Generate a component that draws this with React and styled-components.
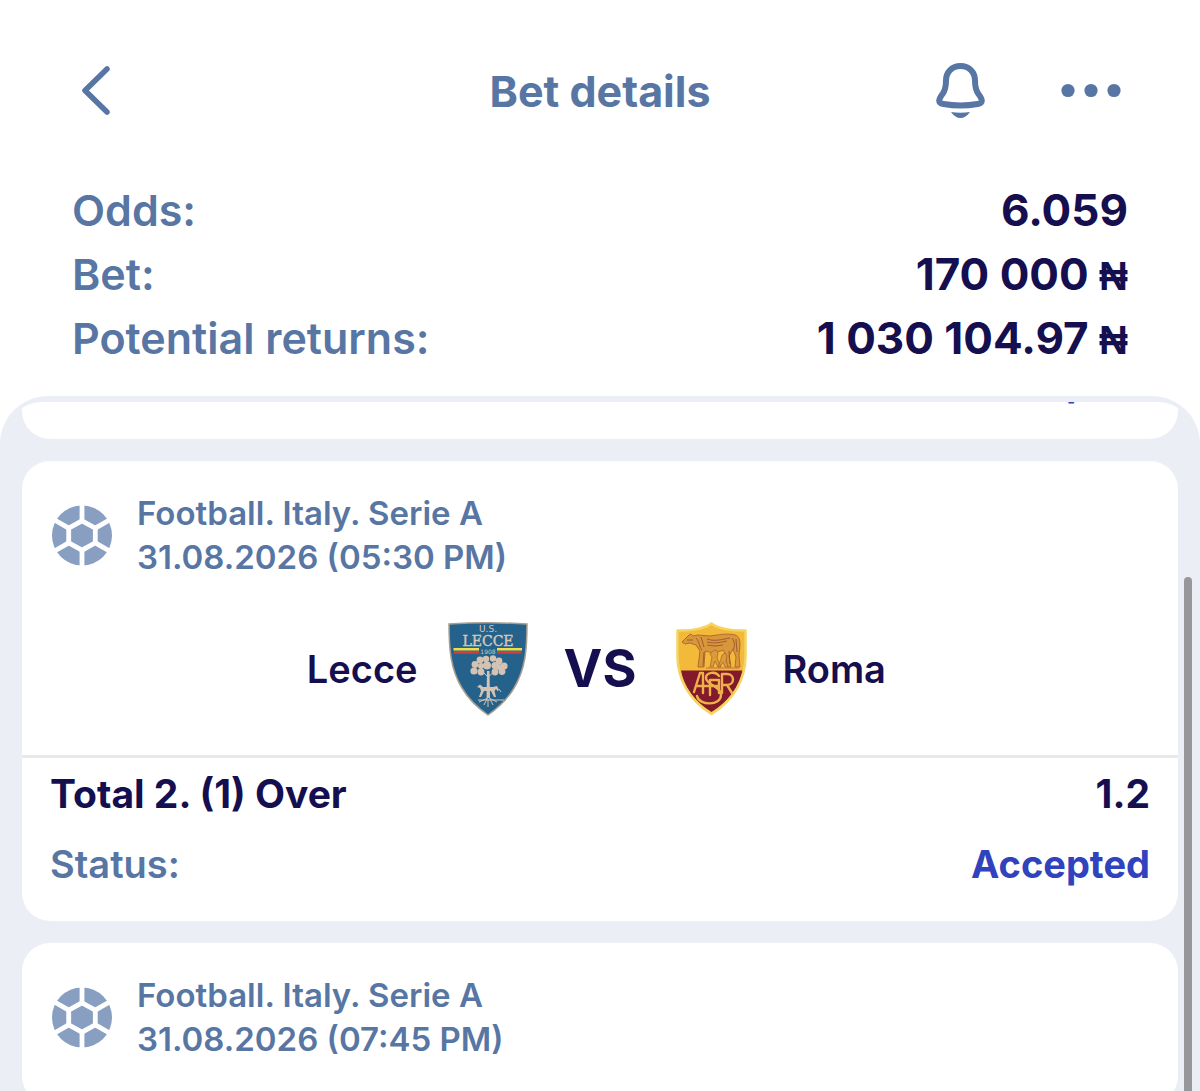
import React from "react";
import styled, { createGlobalStyle } from "styled-components";

const slate = "#5876a3";
const navy = "#150f50";
const haze = "#ebeef4";

const GlobalStyle = createGlobalStyle`
  *, *::before, *::after { box-sizing: border-box; }
  body {
    margin: 0;
    background: #fff;
    color: ${navy};
    font-family: Inter, "Liberation Sans", sans-serif;
  }
  h1, h2, p, dl, dt, dd { margin: 0; font: inherit; }
`;

const Screen = styled.div`
  display: flex;
  flex-direction: column;
  height: 100vh;
  overflow: hidden;
`;

const TopBar = styled.header`
  display: grid;
  grid-template-columns: 1fr auto 1fr;
  align-items: center;
  padding: 60px 78px 56px;
  color: ${slate};
`;

const Title = styled.h1`
  && { font-size: 43px; line-height: 62px; font-weight: 700; }
`;

const Actions = styled.div`
  display: flex;
  justify-content: flex-end;
  gap: 74px;
`;

const IconButton = styled.button`
  display: flex;
  align-items: center;
  justify-self: start;
  padding: 0;
  border: 0;
  background: none;
  color: inherit;
  cursor: pointer;
`;

const Summary = styled.dl`
  padding: 0 72px 26px;
`;

const SummaryRow = styled.div`
  display: flex;
  justify-content: space-between;
  font-size: 43px;
  line-height: 64px;
`;

const SummaryLabel = styled.dt`
  && { font-weight: 600; }
  color: ${slate};
`;

const SummaryValue = styled.dd`
  && { font-size: 44px; font-weight: 700; }
`;

const Currency = styled.span`
  font-family: "Liberation Sans", sans-serif;
  font-size: 40px;
  line-height: 1;
`;

const Sheet = styled.main`
  position: relative;
  flex: 1;
  min-height: 0;
  padding-top: 6px;
  border-radius: 48px 48px 0 0;
  background: ${haze};
`;

const BetList = styled.div`
  display: flex;
  flex-direction: column;
  gap: 22px;
  height: 100%;
  margin: 0 6px;
  padding: 0 16px;
  overflow: hidden;
  border-radius: 36px 36px 0 0;
`;

const ScrolledCard = styled.div`
  display: flex;
  flex-direction: column;
  flex: none;
  justify-content: flex-end;
  height: 37px;
  overflow: hidden;
  border-radius: 0 0 28px 28px;
  background: #fff;
`;

const Card = styled.article`
  flex: none;
  border-radius: 28px;
  background: #fff;
`;

const EventInfo = styled.header`
  display: flex;
  align-items: center;
  gap: 24px;
  padding: 30px 28px 43px 30px;
  color: ${slate};
  font-size: 33px;
  line-height: 44px;
  font-weight: 600;
`;

const Teams = styled.div`
  display: grid;
  grid-template-columns: 1fr auto 1fr;
  align-items: center;
  column-gap: 36px;
  padding-bottom: 39px;
  border-bottom: 3px solid #e6e9ee;
`;

const Team = styled.div`
  display: flex;
  align-items: center;
  justify-content: ${(p) => (p.$home ? "flex-end" : "flex-start")};
  gap: 30px;
  font-size: 38px;
  line-height: 48px;
  font-weight: 600;
`;

const Versus = styled.span`
  font-size: 52px;
  line-height: 64px;
  font-weight: 700;
`;

const Market = styled.div`
  padding: 1px 28px 22px;
`;

const MarketRow = styled.div`
  display: flex;
  justify-content: ${(p) => (p.$end ? "flex-end" : "space-between")};
  font-size: 39px;
  line-height: 70px;
  font-weight: 700;
`;

const StatusLabel = styled.span`
  color: ${slate};
  font-size: 38px;
  font-weight: 600;
`;

const StatusValue = styled.span`
  color: #3042bd;
  font-size: 38px;
`;

const ScrollThumb = styled.div`
  position: absolute;
  top: 181px;
  right: 8px;
  bottom: -8px;
  width: 8px;
  border-radius: 4px;
  background: #96969b;
`;

function BackIcon() {
  return (
    <svg width="40" height="56" viewBox="0 0 40 56" fill="none" stroke="currentColor" strokeWidth="5.5" strokeLinecap="round" strokeLinejoin="round" aria-hidden="true">
      <path d="M29 6 7 27.500 29 49" />
    </svg>
  );
}

function BellIcon() {
  return (
    <svg width="50" height="58" viewBox="0 0 50 58" aria-hidden="true">
      <path d="M24.500 4C16 4 10 10.300 10 18.500c0 6-.6 9.500-3.300 13.200C4.500 34.700 3.200 36.600 3.200 38.700c0 2.300 1.600 2.800 4.300 3.300 11 1.900 23 1.900 34 0 2.700-.5 4.300-1 4.300-3.300 0-2.100-1.300-4-3.500-7-2.700-3.700-3.300-7.200-3.300-13.200C39 10.300 33 4 24.500 4Z" fill="none" stroke="currentColor" strokeWidth="6" strokeLinejoin="round" />
      <path d="M15 50c6 1 13 1 19 0-3 4-6 6-9.500 6s-6.500-2-9.500-6Z" fill="currentColor" />
    </svg>
  );
}

function DotsIcon() {
  return (
    <svg width="62" height="58" viewBox="0 0 62 58" fill="currentColor" aria-hidden="true">
      <circle cx="8" cy="28.500" r="6.600" />
      <circle cx="31" cy="28.500" r="6.600" />
      <circle cx="54" cy="28.500" r="6.600" />
    </svg>
  );
}

function BallIcon() {
  return (
    <svg width="61" height="61" viewBox="0 0 61 61" aria-hidden="true">
      <circle cx="30" cy="30.500" r="30" fill="#899fc1" />
      <g fill="none" stroke="#fff" strokeWidth="4.800">
        <path d="M30 15.800 43.300 23.200V37.800L30 45.200 16.700 37.800V23.200Z" />
        <path d="M30 16V0M43.300 23.200 60 13.500M43.300 37.800 60 47.500M30 45V61M16.700 37.800 0 47.500M16.700 23.200 0 13.500" />
      </g>
    </svg>
  );
}

function LecceCrest() {
  return (
    <svg width="80" height="94" viewBox="0 0 80 94" role="img" aria-label="U.S. Lecce crest">
      <path d="M1 2Q40-.5 79 2C79 27 77.500 47 66 66 59 78 50 86 40 93 30 86 21 78 14 66 2.500 47 1 27 1 2Z" fill="#24628c" stroke="#a69e91" strokeWidth="1.500" />
      <g fill="#d8c6b5" textAnchor="middle" fontFamily="DejaVu Sans, sans-serif" fontWeight="400">
        <text x="40" y="9.500" fontSize="9">U.S.</text>
        <text x="40" y="23.500" fontSize="14" fontFamily="DejaVu Serif, serif" stroke="#d8c6b5" strokeWidth=".4">LECCE</text>
        <text x="40" y="31.500" fontSize="6">1908</text>
      </g>
      <path d="M5.500 27.300H31M49 27.300H74" stroke="#f0df42" strokeWidth="2.600" />
      <path d="M6 30.300H31M49 30.300H73.500" stroke="#d33c3d" strokeWidth="2.800" />
      <g fill="#d4c2b2">
        <circle cx="26" cy="49" r="3.600" /><circle cx="27" cy="42.500" r="3.400" /><circle cx="32" cy="38" r="3.400" />
        <circle cx="38" cy="37" r="3.200" /><circle cx="45" cy="36.500" r="3.200" /><circle cx="51" cy="39" r="3.400" />
        <circle cx="56" cy="44" r="3.600" /><circle cx="54" cy="49.500" r="3.400" /><circle cx="47" cy="50" r="3.400" />
        <circle cx="39" cy="43.500" r="4" /><circle cx="33" cy="50" r="3.400" /><circle cx="47" cy="43.500" r="3.600" />
        <circle cx="33" cy="44" r="3" /><circle cx="51" cy="45" r="3" />
        <path d="m39 49h2.500l.5 27h-3.500zM29 65l3-2.500 3 2.500h10l4-1 2 4-1.500 1-1.500-2-1.500 2 1.500 6h-2l-3-6-7 0-3 6h-2l2-6-1-3Z" />
      </g>
      <g fill="none" stroke="#d4c2b2" strokeWidth="1">
        <path d="m33 48 7 7 8-7M30 78h26M40 76l-9 4M41 76l8 4M39 77l-3 6M42 77l3 6M40 77v8" />
        <path d="m51 67 2 3" />
      </g>
    </svg>
  );
}

function RomaCrest() {
  return (
    <svg width="80" height="94" viewBox="-4 0 80 94" role="img" aria-label="AS Roma crest">
      <path d="M35.500 1.500C30 6 17 9 1.500 8.500V34C1.500 57 13 78 35.500 92 58 78 69.500 57 69.500 34V8.500C54 9 41 6 35.500 1.500Z" fill="#f2b93b" />
      <path d="M5 48.500H66.500C63 65 53 79 35.500 90 18 79 8 65 5 48.500Z" fill="#83192c" />
      <path d="M35.500 1.500C30 6 17 9 1.500 8.500V34C1.500 57 13 78 35.500 92 58 78 69.500 57 69.500 34V8.500C54 9 41 6 35.500 1.500Z" fill="none" stroke="#f5d461" strokeWidth="2.500" strokeLinejoin="round" />
      <path d="M7 19 10 16l3-3 2-1 2 2 5-1 12 1c8-1 17-3 25-1 4 1 5 5 5 10l-1 10 1 12h-5l1-10-3-8-4 7 2 11h-4l-1-12-3-5c-6 3-12 3-18 1l-1 16h-6l2-16-4-6-6-2-5 1-3-2Z" fill="#d9963a" stroke="#a8652e" strokeWidth=".9" />
      <path d="M20 16c4 4 3 9 6 12M25 15l3 10M31 17c8 3 16 0 23-1M31 20c8 2 15 0 20-1M56 16c3 4 3 8 1 12M60 17l1 13M53 29l1 13M28 30l-1 14M11 18h6M31 23l8 1 8-1" fill="none" stroke="#a05c30" strokeWidth="1" />
      <path d="m37 29 3-1 2 3-1 5 4 9h-3l-3-6-2 6h-3l2-10-2-3ZM46 33l3-2 2 3-1 5 2 6h-3l-2-5-3 5h-2l3-8Z" fill="#dc9a3b" stroke="#ad6a2d" strokeWidth=".8" />
      <path d="M30 46h33" stroke="#b87830" strokeWidth="1.200" />
      <g fill="none" stroke="#edb149" strokeWidth="2.400" strokeLinecap="round" strokeLinejoin="round">
        <path d="M18 70 24 51h3V71M21 64H42" />
        <path d="M34 73V58H43V71" />
        <path d="M46 71V52h5c8 0 8 11 0 11h-5m5 0 5 8" />
        <path d="M43 54c-3-5-13-4-13 2 0 7 15 8 15 17 0 11-22 11-24 1" />
      </g>
    </svg>
  );
}

function EventHeader({ league, date }) {
  return (
    <EventInfo>
      <BallIcon />
      <div>
        <h2>{league}</h2>
        <p>{date}</p>
      </div>
    </EventInfo>
  );
}

export default function App() {
  return (
    <>
      <GlobalStyle />
      <Screen>
        <TopBar>
          <IconButton aria-label="Back"><BackIcon /></IconButton>
          <Title>Bet details</Title>
          <Actions>
            <IconButton aria-label="Notifications"><BellIcon /></IconButton>
            <IconButton aria-label="More options"><DotsIcon /></IconButton>
          </Actions>
        </TopBar>
        <Summary>
          <SummaryRow>
            <SummaryLabel>Odds:</SummaryLabel>
            <SummaryValue>6.059</SummaryValue>
          </SummaryRow>
          <SummaryRow>
            <SummaryLabel>Bet:</SummaryLabel>
            <SummaryValue>170 000 <Currency>₦</Currency></SummaryValue>
          </SummaryRow>
          <SummaryRow>
            <SummaryLabel>Potential returns:</SummaryLabel>
            <SummaryValue>1 030 104.97 <Currency>₦</Currency></SummaryValue>
          </SummaryRow>
        </Summary>
        <Sheet>
          <BetList>
            <ScrolledCard>
              <Market>
                <MarketRow $end><StatusValue>Accepted</StatusValue></MarketRow>
              </Market>
            </ScrolledCard>
            <Card>
              <EventHeader league="Football. Italy. Serie A" date="31.08.2026 (05:30 PM)" />
              <Teams>
                <Team $home>Lecce<LecceCrest /></Team>
                <Versus>VS</Versus>
                <Team><RomaCrest />Roma</Team>
              </Teams>
              <Market>
                <MarketRow>
                  <span>Total 2. (1) Over</span>
                  <span>1.2</span>
                </MarketRow>
                <MarketRow>
                  <StatusLabel>Status:</StatusLabel>
                  <StatusValue>Accepted</StatusValue>
                </MarketRow>
              </Market>
            </Card>
            <Card>
              <EventHeader league="Football. Italy. Serie A" date="31.08.2026 (07:45 PM)" />
            </Card>
          </BetList>
          <ScrollThumb />
        </Sheet>
      </Screen>
    </>
  );
}
